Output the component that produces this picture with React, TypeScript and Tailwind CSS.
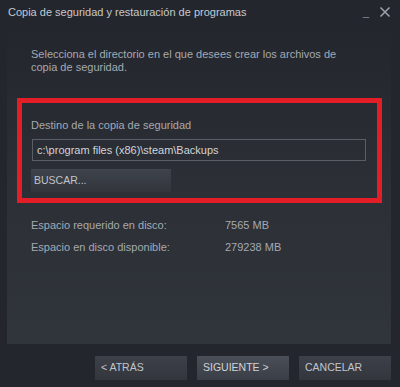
export default function App() {
  return (
    <div
      className="w-[400px] h-[387px] bg-[#23262d] flex flex-col text-[11px] overflow-hidden"
      style={{ fontFamily: '"Liberation Sans", Arial, sans-serif' }}
    >
      {/* title bar */}
      <div className="h-[24px] flex items-center pl-[8px] pr-[6px] text-[#c5c9cf]">
        <span className="flex-1">Copia de seguridad y restauración de programas</span>
        <span className="text-[#8a8f97] mr-[10px] leading-none">_</span>
        <svg width="12" height="12" viewBox="0 0 12 12" className="mr-[3px]">
          <path d="M1.5 1.5 L10.5 10.5 M10.5 1.5 L1.5 10.5" stroke="#9aa0a8" strokeWidth="1.6" />
        </svg>
      </div>

      {/* content panel */}
      <div className="ml-[7px] mr-[9px] h-[320px] bg-gradient-to-b from-[#23262d] via-[#2c2f36] to-[#30343b] pt-[24px]">
        <p className="px-[24px] text-[#a4aab2] leading-[13px]">
          Selecciona el directorio en el que desees crear los archivos de
          <br />
          copia de seguridad.
        </p>

        <div className="mt-[24px] ml-[10px] w-[365px] h-[105px] border-[5px] border-[#e31e26] pl-[9px] pt-[15px]">
          <div className="text-[#a4aab2] leading-[14px]">Destino de la copia de seguridad</div>
          <div className="mt-[7px] ml-[1px] w-[334px] h-[22px] border border-[#595e67] flex items-center pl-[4px] text-[#d0d4da]">
            c:\program files (x86)\steam\Backups
          </div>
          <button className="mt-[8px] w-[140px] h-[23px] bg-gradient-to-b from-[#3f434b] to-[#32353c] text-left pl-[3px] text-[10.5px] text-[#c0c5cc]">
            BUSCAR...
          </button>
        </div>

        <div className="mt-[15px] pl-[24px] grid grid-cols-[194px_1fr] gap-y-[8px] text-[#a4aab2] leading-[14px]">
          <span>Espacio requerido en disco:</span>
          <span>7565 MB</span>
          <span>Espacio en disco disponible:</span>
          <span>279238 MB</span>
        </div>
      </div>

      {/* footer buttons */}
      <div className="mt-[12px] flex justify-end gap-[10px] pr-[9px]">
        <button className="w-[92px] h-[24px] bg-gradient-to-b from-[#3d4048] to-[#33363d] text-left pl-[6px] text-[10.5px] text-[#c0c5cc]">
          &lt; ATRÁS
        </button>
        <button className="w-[92px] h-[24px] bg-gradient-to-b from-[#4a4e57] to-[#3a3e46] text-left pl-[6px] text-[10.5px] text-[#d0d4da]">
          SIGUIENTE &gt;
        </button>
        <button className="w-[92px] h-[24px] bg-gradient-to-b from-[#3d4048] to-[#33363d] text-left pl-[6px] text-[10.5px] text-[#c0c5cc]">
          CANCELAR
        </button>
      </div>
    </div>
  );
}
